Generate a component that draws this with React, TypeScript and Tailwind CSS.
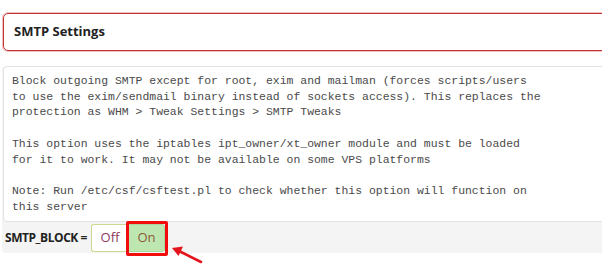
const HELP_TEXT = `Block outgoing SMTP except for root, exim and mailman (forces scripts/users
to use the exim/sendmail binary instead of sockets access). This replaces the
protection as WHM > Tweak Settings > SMTP Tweaks

This option uses the iptables ipt_owner/xt_owner module and must be loaded
for it to work. It may not be available on some VPS platforms

Note: Run /etc/csf/csftest.pl to check whether this option will function on
this server`

function ArrowMark() {
  return (
    <svg className="absolute left-[166px] top-[242px]" width="42" height="26" viewBox="0 0 42 26">
      <line x1="35" y1="20" x2="13" y2="9" stroke="#e3141c" strokeWidth="2.6" strokeLinecap="round" />
      <polygon points="6,6 17,4.5 12.5,14" fill="#e3141c" />
    </svg>
  )
}

export default function App() {
  return (
    <div className="relative h-[269px] w-full overflow-hidden bg-white font-['Open_Sans',sans-serif] text-[#222]">
      <div className="pt-[13px] pl-[3px]">
        <div className="flex h-[38px] w-[640px] items-center rounded-[5px] border border-[#c03431] pl-[10px] shadow-[0_0_0_1px_rgba(205,80,80,0.35)]">
          <h2 className="text-[13px] font-bold text-[#222]">SMTP Settings</h2>
        </div>
      </div>

      <div className="mt-[15px] ml-[2px] w-[640px] rounded-[4px] bg-[#f4f4f4]">
        <pre className="ml-[1px] h-[156px] rounded-[4px] border border-[#e3e3e3] bg-white pt-[6px] pl-[8px] font-['Liberation_Mono',monospace] text-[11.45px] leading-[15.7px] text-[#4a4a4a]">
          {HELP_TEXT}
        </pre>
        <div className="flex h-[31px] items-center pl-[3px]">
          <span className="w-[84px] whitespace-nowrap text-[12px] font-bold tracking-[-0.45px] text-[#222]">SMTP_BLOCK =</span>
          <div className="ml-[2px] flex h-[28px]">
            <button className="w-[37px] rounded-l-[3px] border border-r-0 border-[#c9d98f] bg-white text-[13px] text-[#8e3a5c]">
              Off
            </button>
            <button className="w-[37px] rounded-r-[3px] border border-[#a9d69c] bg-[#bee6b1] text-[13px] text-[#8a5a3c]">
              On
            </button>
          </div>
        </div>
      </div>

      <div className="absolute left-[126px] top-[221px] h-[35px] w-[42px] rounded-[2px] border-[3px] border-[#f20d0d]" />
      <ArrowMark />
    </div>
  )
}
